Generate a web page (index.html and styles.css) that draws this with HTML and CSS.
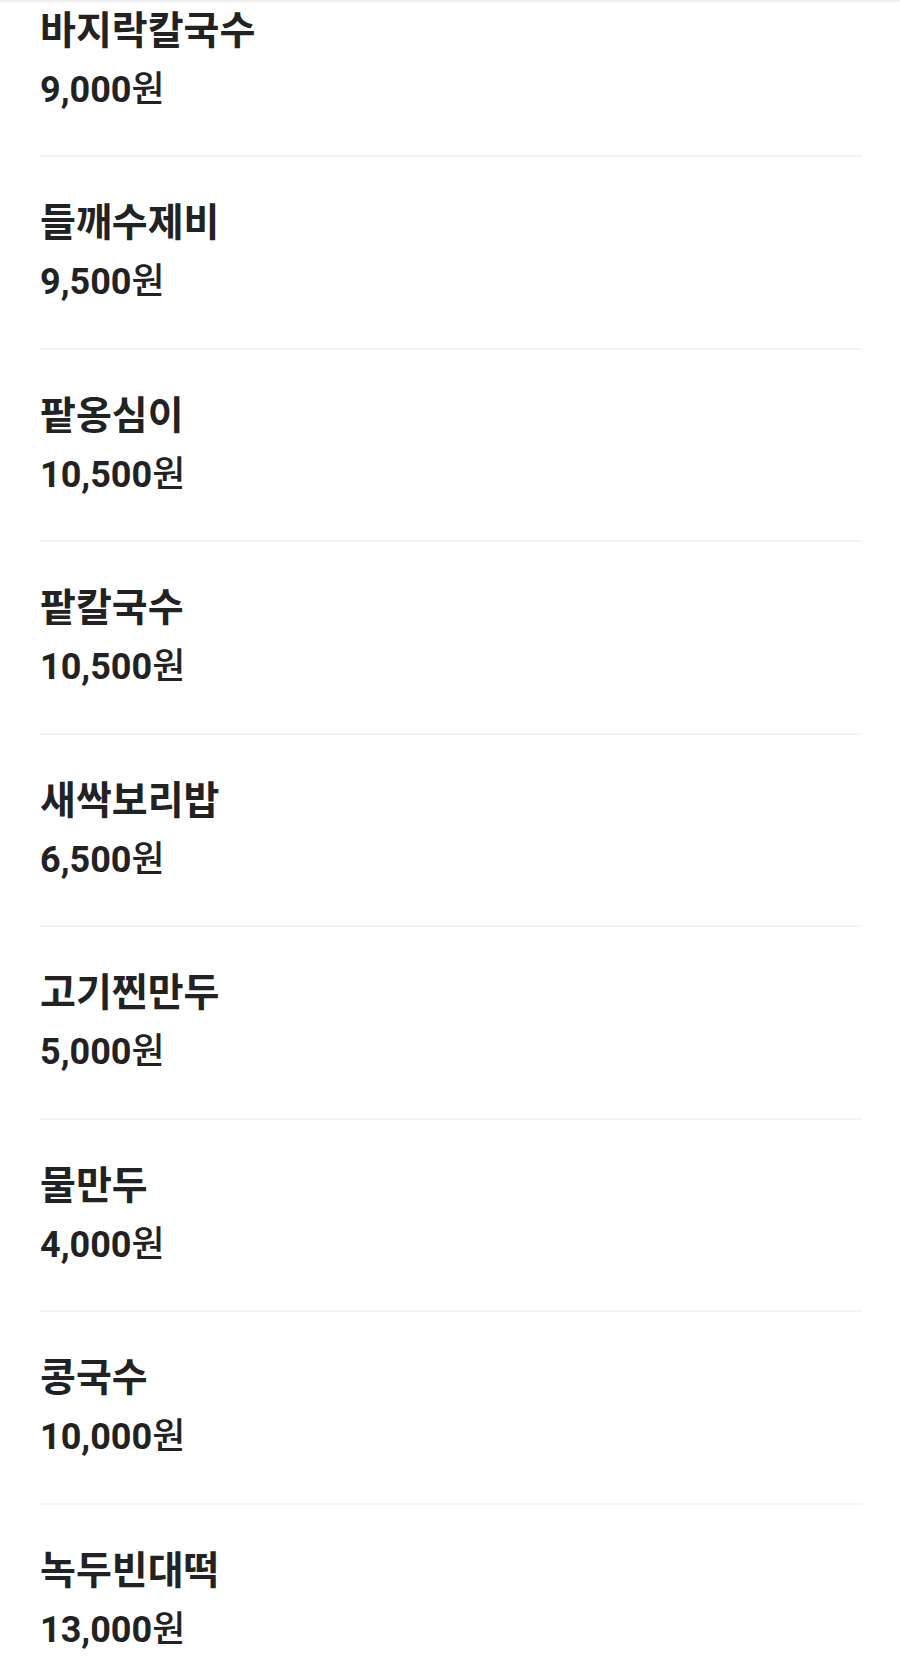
FILE: index.html
```html
<!DOCTYPE html>
<html lang="ko">
<head>
	<meta charset="UTF-8">
	<meta name="viewport" content="width=device-width, initial-scale=1.0">
	<title>메뉴</title>
	<link rel="stylesheet" href="styles.css">
</head>
<body>

<div class="top-shadow"></div>

<ul class="menu">
	<li class="item"><div class="name">바지락칼국수</div><div class="price">9,000<span class="won">원</span></div></li>
	<li class="item"><div class="name">들깨수제비</div><div class="price">9,500<span class="won">원</span></div></li>
	<li class="item"><div class="name">팥옹심이</div><div class="price">10,500<span class="won">원</span></div></li>
	<li class="item"><div class="name">팥칼국수</div><div class="price">10,500<span class="won">원</span></div></li>
	<li class="item"><div class="name">새싹보리밥</div><div class="price">6,500<span class="won">원</span></div></li>
	<li class="item"><div class="name">고기찐만두</div><div class="price">5,000<span class="won">원</span></div></li>
	<li class="item"><div class="name">물만두</div><div class="price">4,000<span class="won">원</span></div></li>
	<li class="item"><div class="name">콩국수</div><div class="price">10,000<span class="won">원</span></div></li>
	<li class="item"><div class="name">녹두빈대떡</div><div class="price">13,000<span class="won">원</span></div></li>
</ul>

</body>
</html>
```

FILE: styles.css
```css
body {
	margin: 0;
	background: white;
	color: #222;
	font-family: Roboto, "Noto Sans CJK KR", sans-serif;
	overflow: hidden;
}

.top-shadow {
	position: fixed;
	top: 0;
	left: 0;
	right: 0;
	height: 0;
	box-shadow: 0 0 3px 1px rgba(0, 0, 0, 0.15);
	z-index: 2;
}

.menu {
	list-style: none;
	margin: -35.5px 38px 0 40px;
	padding: 0;
}

.item {
	padding: 38px 0 43.5px;
	border-bottom: 2px solid #f4f4f4;
}

.name {
	font-family: "Noto Sans CJK KR", sans-serif;
	font-size: 39px;
	font-weight: 700;
	line-height: 48px;
}

.price {
	font-size: 36px;
	font-weight: 700;
	line-height: 44px;
	margin-top: 17px;
}

.won {
	font-family: "Noto Sans CJK KR", sans-serif;
	font-weight: 500;
	line-height: 36px;
}
```
